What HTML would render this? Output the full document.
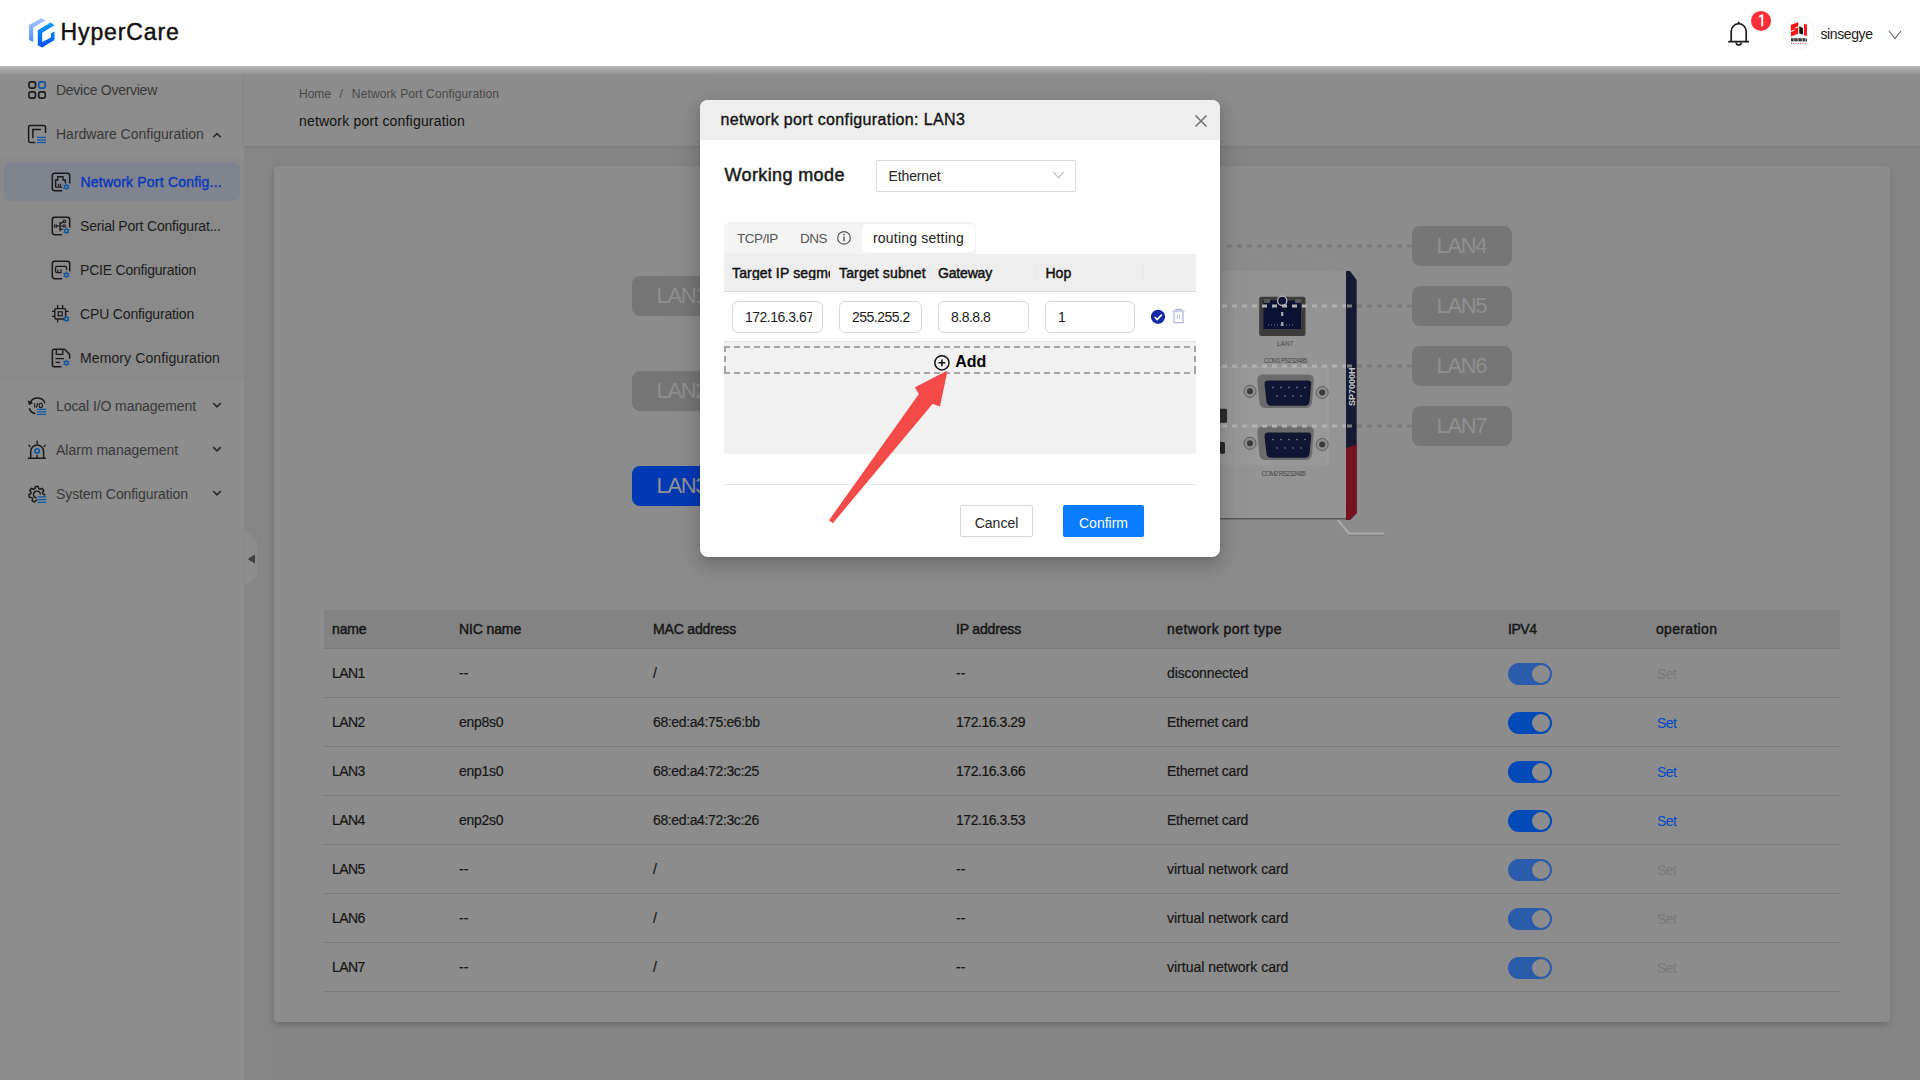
<!DOCTYPE html>
<html><head><meta charset="utf-8"><style>
*{box-sizing:border-box;margin:0;padding:0}
html,body{width:1920px;height:1080px;overflow:hidden}
body{position:relative;background:#858585;font-family:"Liberation Sans",sans-serif;color:#222;}
.a{position:absolute;white-space:nowrap;line-height:1}
#hdr{position:absolute;left:0;top:0;width:1920px;height:66px;background:#fff;z-index:5}
#hshadow{position:absolute;left:0;top:66px;width:1920px;height:9px;background:linear-gradient(#b9b9b9,rgba(140,140,140,0));z-index:4}
#side{position:absolute;left:0;top:66px;width:244px;height:1014px;background:#8d8d8d}
#sub{position:absolute;left:0;top:158px;width:244px;height:222px;background:#8a8a8a}
#act{position:absolute;left:4px;top:162px;width:236px;height:39px;background:#80848e;border-radius:7px}
.mt{font-size:14px;color:#383838}
.mt.sm{color:#1c1c1c}
.mt.act{color:#0838bc;-webkit-text-stroke:0.4px #0838bc}
#ph{position:absolute;left:244px;top:66px;width:1676px;height:80px;background:#8c8c8c;box-shadow:0 1px 3px rgba(0,0,0,0.1)}
#card{position:absolute;left:274px;top:166px;width:1616px;height:856px;background:#8c8c8c;border-radius:4px;box-shadow:-1px 3px 6px -1px rgba(40,50,60,0.35)}
.lanb{position:absolute;width:100px;height:40px;border-radius:8px;background:#767676;color:#8f8f8f;font-size:22px;line-height:39px;text-align:center;letter-spacing:-1.4px;text-indent:-1.4px}
.th{font-size:14px;color:#161616;-webkit-text-stroke:0.45px #161616}
.td{font-size:14px;color:#161616;-webkit-text-stroke:0.2px #161616}
.num{letter-spacing:-0.4px}
.tog{position:absolute;width:44px;height:22px;border-radius:11px;background:#004ab8}
.tog::after{content:"";position:absolute;right:2.2px;top:2px;width:18px;height:18px;border-radius:50%;background:#8c8c8c}
.set{font-size:14px;color:#0048c8}
.setd{font-size:14px;color:#7a7a7a}
.rowb{position:absolute;left:324px;width:1516px;height:1px;background:#7b7b7b}
#modal{position:absolute;left:700px;top:100px;width:520px;height:457px;background:#fff;border-radius:8px;overflow:hidden;z-index:10;box-shadow:0 3px 6px -4px rgba(0,0,0,0.2),0 6px 16px rgba(0,0,0,0.14),0 9px 28px 8px rgba(0,0,0,0.08)}
.togd{background:#2b5cac}
.inp{height:32px;border:1px solid #d9d9d9;border-radius:6px;padding-left:12px;padding-right:12px;overflow:hidden;font-size:14px;line-height:30px;color:#1a1a1a;letter-spacing:-0.5px;background:#fff}
.btn{border-radius:2px;font-size:14px;line-height:30px;padding-top:1.5px;text-align:center;box-shadow:0 2px 0 rgba(0,0,0,0.02)}

.sb{-webkit-text-stroke:0.45px currentColor}

</style></head><body>

<div id="hdr">
  <svg class="a" style="left:0;top:0" width="60" height="60" viewBox="0 0 60 60">
    <defs>
      <linearGradient id="lg1" x1="0" y1="0" x2="0" y2="1"><stop offset="0" stop-color="#a9c9ff"/><stop offset="1" stop-color="#4d8dff"/></linearGradient>
      <linearGradient id="lg2" x1="0" y1="0" x2="0" y2="1"><stop offset="0" stop-color="#0a9dff"/><stop offset="1" stop-color="#0050ff"/></linearGradient>
    </defs>
    <path d="M29.1 25 L41.6 18.1 L45.5 20.4 L33.3 27.4 L33.3 42 L29.1 39.9Z" fill="url(#lg1)"/>
    <path d="M37.8 30.2 L50.6 22.6 L54.5 25.2 L42.2 32.7 L42.2 41.9 L51 37.4 L51 33.2 L54.5 31.4 L54.5 40 L42.1 47.6 L37.8 45.3Z" fill="url(#lg2)"/>
  </svg>
  <div class="a sb" style="left:60.5px;top:20.9px;font-size:23px;letter-spacing:0.9px;color:#111">HyperCare</div>
<svg class="a" style="left:1720px;top:8px" width="60" height="44" viewBox="1720 8 60 44">
  <path d="M1731.2 41.6 V31.5 A7.5 7.8 0 0 1 1746.2 31.5 V41.6" fill="none" stroke="#1a1a1a" stroke-width="1.7"/>
  <path d="M1729 41.7 H1748.2" stroke="#1a1a1a" stroke-width="1.8" stroke-linecap="round"/>
  <path d="M1736.2 42.6 A2.5 2.5 0 0 0 1741.2 42.6" fill="none" stroke="#1a1a1a" stroke-width="1.6"/>
  <path d="M1737.2 23.8 L1738.7 21 L1740.2 23.8Z" fill="#1a1a1a"/>
  <circle cx="1761" cy="20.9" r="10" fill="#fe2f38"/>
</svg>
<svg class="a" style="left:1751px;top:11px" width="20" height="20" viewBox="1751 11 20 20"><path d="M1759.2 16.8 L1762.2 15.2 V26.2" fill="none" stroke="#fff" stroke-width="1.9" stroke-linejoin="round"/></svg>
<svg class="a" style="left:1780px;top:14px" width="40" height="40" viewBox="1780 14 40 40">
  <circle cx="1798.8" cy="33" r="15.8" fill="#fff" stroke="#f0f0f0" stroke-width="0.8"/>
  <path d="M1790.76 24.91 L1798.21 21.92 V33.64 L1790.97 36.41Z" fill="#ff1414"/><path d="M1794.6 28.3 L1798.6 26.6 M1790.6 31.8 L1794.6 30.1" stroke="#fff" stroke-width="1"/><path d="M1794.6 27.9 V30.5" stroke="#ff1414" stroke-width="0.5"/>
  <path d="M1799.28 26.18 L1802.9 27.89 V34.7 L1799.28 33.42Z" fill="#111"/>
  <path d="M1803.96 23.63 L1806.94 24.69 V35.98 L1803.96 35.13Z" fill="#ff1414"/>
  <g fill="#3a3a3a"><rect x="1791" y="38.2" width="2.6" height="3.2"/><rect x="1794.2" y="38.2" width="3.4" height="3.2"/><rect x="1798.2" y="38.2" width="3.6" height="3.2"/><rect x="1802.4" y="38.2" width="2.8" height="3.2"/><rect x="1805.6" y="38.6" width="1.4" height="3"/></g>
  <path d="M1791 43.5 H1807" stroke="#f33" stroke-width="1" stroke-dasharray="1 1.3"/>
</svg>
<div class="a" style="left:1820.5px;top:27.1px;font-size:14px;color:#1a1a1a;letter-spacing:-0.4px">sinsegye</div>
<svg class="a" style="left:1884px;top:26px" width="20" height="16" viewBox="1884 26 20 16">
  <path d="M1889 31 L1895 38.6 L1901 31" fill="none" stroke="#666" stroke-width="1.1"/>
</svg>

</div>
<div id="hshadow"></div>

<div id="side"></div><div id="sub"></div><div id="act"></div>
<div class="a mt" style="left:56px;top:83px;letter-spacing:-0.27px">Device Overview</div>
<div class="a mt" style="left:56px;top:126.9px;letter-spacing:0px">Hardware Configuration</div>
<div class="a mt sm act" style="left:80.5px;top:174.9px;letter-spacing:0.2px">Network Port Config...</div>
<div class="a mt sm" style="left:80px;top:219px;letter-spacing:-0.19px">Serial Port Configurat...</div>
<div class="a mt sm" style="left:80px;top:263px;letter-spacing:-0.21px">PCIE Configuration</div>
<div class="a mt sm" style="left:80px;top:307px;letter-spacing:-0.16px">CPU Configuration</div>
<div class="a mt sm" style="left:80px;top:351px;letter-spacing:0.11px">Memory Configuration</div>
<div class="a mt" style="left:56px;top:399px;letter-spacing:-0.08px">Local I/O management</div>
<div class="a mt" style="left:56px;top:443px;letter-spacing:0px">Alarm management</div>
<div class="a mt" style="left:56px;top:487px;letter-spacing:-0.1px">System Configuration</div>
<svg class="a" style="left:0;top:0;z-index:2" width="250" height="520"><rect x="28.9" y="81.9" width="6.6" height="6.2" rx="2" fill="none" stroke="#1a1a1a" stroke-width="1.6"/>
<rect x="38.7" y="81.9" width="6.6" height="6.2" rx="2" fill="none" stroke="#0b56a6" stroke-width="1.6"/>
<rect x="28.9" y="91.9" width="6.6" height="6.2" rx="2" fill="none" stroke="#1a1a1a" stroke-width="1.6"/>
<rect x="38.7" y="91.9" width="6.6" height="6.2" rx="2" fill="none" stroke="#1a1a1a" stroke-width="1.6"/>
<path d="M45.5 133 V127.5 Q45.5 125.5 43.5 125.5 H30.5 Q28.6 125.5 28.6 127.5 V140.6 Q28.6 142.6 30.5 142.6 H35.3" fill="none" stroke="#1a1a1a" stroke-width="1.5"/>
<path d="M32.9 138.2 V129.6 H41" fill="none" stroke="#1a1a1a" stroke-width="1.5"/>
<line x1="37" y1="137.4" x2="46" y2="137.4" stroke="#0b56a6" stroke-width="1.3"/>
<line x1="37" y1="140" x2="46" y2="140" stroke="#0b56a6" stroke-width="1.3"/>
<line x1="37" y1="142.5" x2="46" y2="142.5" stroke="#0b56a6" stroke-width="1.3"/>
<path d="M69.7 183.6 V175.8 Q69.7 173.3 67.3 173.3 H54.8 Q52.3 173.3 52.3 175.8 V188.3 Q52.3 190.7 54.8 190.7 H62.1" fill="none" stroke="#1a1a1a" stroke-width="1.5"/>
<path d="M55.6 187.2 V180 H57.8 V176.8 H63 V180 H65.3 V183.2" fill="none" stroke="#1a1a1a" stroke-width="1.4"/><path d="M55.6 187.2 H62.6 M58.4 183.8 V187 M60.4 183.8 V187" stroke="#1a1a1a" stroke-width="1.1"/>
<polygon points="66.40,183.10 69.60,188.65 63.20,188.65" fill="#0b56a6"/><polygon points="66.40,190.50 63.20,184.95 69.60,184.95" fill="#0b56a6"/><circle cx="66.4" cy="186.8" r="1.15" fill="#80848e"/>
<path d="M69.7 227.6 V219.8 Q69.7 217.3 67.3 217.3 H54.8 Q52.3 217.3 52.3 219.8 V232.3 Q52.3 234.7 54.8 234.7 H62.1" fill="none" stroke="#1a1a1a" stroke-width="1.5"/>
<path d="M56.5 226 H63 M60 222 V231.5 M60 224.2 L63.3 221.8 M60 228.6 L62.6 229.6" fill="none" stroke="#1a1a1a" stroke-width="1.2"/><circle cx="55.6" cy="226" r="1.3" fill="none" stroke="#1a1a1a" stroke-width="1.1"/><circle cx="64.4" cy="221.3" r="1.3" fill="none" stroke="#1a1a1a" stroke-width="1.1"/><circle cx="64.2" cy="226" r="1.2" fill="none" stroke="#1a1a1a" stroke-width="1.1"/>
<polygon points="66.40,227.10 69.60,232.65 63.20,232.65" fill="#0b56a6"/><polygon points="66.40,234.50 63.20,228.95 69.60,228.95" fill="#0b56a6"/><circle cx="66.4" cy="230.8" r="1.15" fill="#8a8a8a"/>
<path d="M69.7 271.6 V263.8 Q69.7 261.3 67.3 261.3 H54.8 Q52.3 261.3 52.3 263.8 V276.3 Q52.3 278.7 54.8 278.7 H62.1" fill="none" stroke="#1a1a1a" stroke-width="1.5"/>
<path d="M66.6 269.8 V268 Q66.6 266.4 65 266.4 H57.1 Q55.5 266.4 55.5 268 V271 Q55.5 272.6 57.1 272.6 H61.5" fill="none" stroke="#1a1a1a" stroke-width="1.3"/><path d="M57.8 269.4 V272.4 M61 269.4 V272.4" stroke="#1a1a1a" stroke-width="1.2"/><polygon points="66.40,271.10 69.60,276.65 63.20,276.65" fill="#0b56a6"/><polygon points="66.40,278.50 63.20,272.95 69.60,272.95" fill="#0b56a6"/><circle cx="66.4" cy="274.8" r="1.15" fill="#8a8a8a"/>
<rect x="54.8" y="308.6" width="10.8" height="10.4" rx="1.2" fill="none" stroke="#1a1a1a" stroke-width="1.4"/><rect x="58.2" y="311.8" width="4" height="4" fill="none" stroke="#1a1a1a" stroke-width="1.2"/>
<path d="M57.6 305 V308.6 M62.6 305 V308.6 M57.6 319 V322.6 M52 311.4 H54.8 M52 316.4 H54.8 M65.6 311.4 H68.6" stroke="#1a1a1a" stroke-width="1.3"/>
<polygon points="66.40,315.10 69.60,320.65 63.20,320.65" fill="#0b56a6"/><polygon points="66.40,322.50 63.20,316.95 69.60,316.95" fill="#0b56a6"/><circle cx="66.4" cy="318.8" r="1.15" fill="#8a8a8a"/>
<path d="M61.4 366.7 H54.3 Q52.4 366.7 52.4 364.7 V351.3 Q52.4 349.3 54.3 349.3 H64.5 L69.6 354.4 V358.8" fill="none" stroke="#1a1a1a" stroke-width="1.5"/><path d="M56.3 349.6 V354.3 H62.8 V349.6" fill="none" stroke="#1a1a1a" stroke-width="1.3"/><path d="M55.5 358.6 H64 M55.5 362.3 H60" stroke="#1a1a1a" stroke-width="1.3"/>
<polygon points="66.40,359.10 69.60,364.65 63.20,364.65" fill="#0b56a6"/><polygon points="66.40,366.50 63.20,360.95 69.60,360.95" fill="#0b56a6"/><circle cx="66.4" cy="362.8" r="1.15" fill="#8a8a8a"/>
<path d="M45.1 403.3 A8 8 0 0 0 30.3 402.6" fill="none" stroke="#1a1a1a" stroke-width="1.5"/>
<path d="M29.3 408.2 A8 8 0 0 0 35.3 413.6" fill="none" stroke="#1a1a1a" stroke-width="1.5"/>
<path d="M28 400.8 L29.2 404.8 L32.6 403Z" fill="#1a1a1a" stroke="#1a1a1a" stroke-width="0.6" stroke-linejoin="round"/>
<path d="M34.6 403.2 V407.6 M37.9 403 L36.1 407.8" stroke="#1a1a1a" stroke-width="1.1"/><ellipse cx="40.8" cy="405.4" rx="1.7" ry="2.2" fill="none" stroke="#1a1a1a" stroke-width="1.1"/>
<line x1="37.4" y1="409.3" x2="45.8" y2="409.3" stroke="#0b56a6" stroke-width="1.25" stroke-linecap="round"/>
<line x1="37.4" y1="411.8" x2="45.8" y2="411.8" stroke="#0b56a6" stroke-width="1.25" stroke-linecap="round"/>
<line x1="37.4" y1="414.3" x2="45.8" y2="414.3" stroke="#0b56a6" stroke-width="1.25" stroke-linecap="round"/>
<path d="M28.4 458.3 H45.4" stroke="#1a1a1a" stroke-width="1.5" stroke-linecap="round"/><path d="M30.7 458.3 V451.5 A6.45 6.45 0 0 1 43.6 451.5 V458.3" fill="none" stroke="#1a1a1a" stroke-width="1.5"/>
<path d="M37.1 441.2 V443.6 M28.8 445.2 L30 446.6 M45.2 445.2 L44 446.6 M37.1 455.3 V458" stroke="#1a1a1a" stroke-width="1.3" stroke-linecap="round"/>
<circle cx="37.1" cy="450.9" r="2.2" fill="none" stroke="#0b56a6" stroke-width="1.5"/>
<path d="M38.71 488.61 L38.16 486.42 L35.44 486.42 L34.89 488.61 L33.54 489.26 L31.48 488.32 L29.79 490.45 L31.16 492.24 L30.83 493.71 L28.81 494.73 L29.42 497.38 L31.68 497.42 L32.61 498.60 L32.16 500.81 L34.60 501.99 L36.05 500.25 L37.55 500.25 L39.00 501.99 L41.44 500.81 L40.99 498.60 L41.92 497.42 L44.18 497.38 L44.79 494.73 L42.77 493.71 L42.44 492.24 L43.81 490.45 L42.12 488.32 L40.06 489.26Z" fill="none" stroke="#1a1a1a" stroke-width="1.45" stroke-linejoin="round"/>
<path d="M40.3 494.6 A3.4 3.4 0 1 0 36.6 497.9" fill="none" stroke="#1a1a1a" stroke-width="1.45"/>
<rect x="37.2" y="495.6" width="10" height="9" fill="#8c8c8c"/>
<line x1="38" y1="496.9" x2="45.8" y2="496.9" stroke="#0b56a6" stroke-width="1.25" stroke-linecap="round"/>
<line x1="38" y1="499.6" x2="45.8" y2="499.6" stroke="#0b56a6" stroke-width="1.25" stroke-linecap="round"/>
<line x1="38" y1="502.3" x2="45.8" y2="502.3" stroke="#0b56a6" stroke-width="1.25" stroke-linecap="round"/>
<path d="M213.2 137.3 L217 133.6 L220.8 137.3" fill="none" stroke="#2a2a2a" stroke-width="1.6"/>
<path d="M213.2 403.1 L217 406.9 L220.8 403.1" fill="none" stroke="#2a2a2a" stroke-width="1.6"/>
<path d="M213.2 447.1 L217 450.9 L220.8 447.1" fill="none" stroke="#2a2a2a" stroke-width="1.6"/>
<path d="M213.2 491.1 L217 494.9 L220.8 491.1" fill="none" stroke="#2a2a2a" stroke-width="1.6"/></svg>
<div class="a" style="left:244px;top:146px;width:30px;height:934px;background:#868686"></div>
<svg class="a" style="left:240px;top:520px" width="30" height="80" viewBox="240 520 30 80">
  <path d="M245 530 L257 541 V575 L245 586Z" fill="#8d8d8d"/>
  <path d="M247.5 559 L255 554.5 V563.5Z" fill="#404040"/>
</svg>

<div id="ph"></div>
<div class="a" style="left:299px;top:87.6px;font-size:12px;color:#484848">Home<span style="margin:0 9px 0 8.5px">/</span><span style="letter-spacing:0.12px">Network Port Configuration</span></div>
<div class="a" style="left:299px;top:114px;font-size:14px;color:#111;letter-spacing:0.19px">network port configuration</div>
<div id="card"></div>
<!-- LAN buttons -->
<div class="lanb" style="left:632px;top:276px">LAN1</div>
<div class="lanb" style="left:632px;top:371px">LAN2</div>
<div class="lanb" style="left:632px;top:466px;background:#0039b4;color:#939393">LAN3</div>
<div class="lanb" style="left:1412px;top:226px">LAN4</div>
<div class="lanb" style="left:1412px;top:286px">LAN5</div>
<div class="lanb" style="left:1412px;top:346px">LAN6</div>
<div class="lanb" style="left:1412px;top:406px">LAN7</div>
<svg class="a" style="left:1200px;top:190px" width="240" height="360" viewBox="1200 190 240 360">
  <defs>
    <linearGradient id="face" x1="0" y1="0" x2="0" y2="1"><stop offset="0" stop-color="#929292"/><stop offset="0.5" stop-color="#959595"/><stop offset="1" stop-color="#939393"/></linearGradient>
    <linearGradient id="stripe" x1="0" y1="0" x2="0" y2="1"><stop offset="0" stop-color="#141a33"/><stop offset="0.7" stop-color="#151a30"/><stop offset="0.71" stop-color="#6a1020"/><stop offset="1" stop-color="#7a1424"/></linearGradient>
  </defs>
  <!-- faint perspective lines -->
  <path d="M1220 238 L1270 258 M1300 252 L1345 268" stroke="#8fa0a8" stroke-width="0.6" opacity="0.6"/>
  <!-- foot -->
  <path d="M1337.5 519.5 L1349 533.5 H1384.5" fill="none" stroke="#a9a9a9" stroke-width="2.2"/>
  <path d="M1349 535.5 H1384.5" stroke="#7a7a7a" stroke-width="0.8"/>
  <!-- face -->
  <rect x="1200" y="271" width="146.5" height="248" fill="url(#face)"/>
  <rect x="1200" y="518" width="146.5" height="1.5" fill="#5a5a5a"/>
  <!-- stripe -->
  <path d="M1346 271 H1350 L1356.7 280 V513 L1350 520 H1346Z" fill="#151a32"/>
  <path d="M1346 448 L1356.7 444.5 V513 L1350 520 H1346Z" fill="#741222"/>
  <text x="0" y="0" transform="translate(1354.5 406) rotate(-90)" font-family="Liberation Sans" font-size="9" font-weight="bold" fill="#c8c8c8">SP7000H</text>
  <!-- panel -->
  <rect x="1200" y="367.5" width="128" height="97.5" fill="#989898"/>
  <path d="M1200 367.5 H1328 V465" fill="none" stroke="#a5a5a5" stroke-width="0.8"/>
  <!-- RJ45 -->
  <rect x="1259.2" y="296.7" width="46.3" height="39.4" rx="2" fill="#3c3c3c"/>
  <rect x="1263.5" y="300.5" width="37.5" height="28.5" fill="#0a1132"/>
  <rect x="1264" y="299" width="6" height="4" fill="#555"/>
  <rect x="1295" y="299" width="6" height="4" fill="#555"/>
  <circle cx="1282.2" cy="300.8" r="4.6" fill="#0a1132" stroke="#b9b9b9" stroke-width="1.3"/><rect x="1281" y="312" width="2.4" height="4" fill="#9a9aa8"/><rect x="1281" y="322" width="2.4" height="4" fill="#9a9aa8"/><path d="M1268 325 H1294" stroke="#9a9aa8" stroke-width="0.8" stroke-dasharray="1 2"/>
  <text x="1277" y="346" font-family="Liberation Sans" font-size="6.5" fill="#4a4a4a">LAN7</text>
  <text x="1264" y="362.5" font-family="Liberation Sans" font-size="6.6" fill="#4a4a4a" textLength="43.5">COM1 PS232/485</text>
  <!-- DB9 COM1 -->
  <g id="db9">
    <circle cx="1250" cy="391.3" r="6" fill="#8e8e8e" stroke="#5e5e5e" stroke-width="1"/>
    <circle cx="1250" cy="391.3" r="3" fill="#3a3a3a"/>
    <circle cx="1322.2" cy="392.5" r="6" fill="#8e8e8e" stroke="#5e5e5e" stroke-width="1"/>
    <circle cx="1322.2" cy="392.5" r="3" fill="#3a3a3a"/>
    <path d="M1257.3 380 Q1257.3 374.5 1263 374.5 H1308 Q1314 374.5 1313.8 380 L1312 403 Q1311 408 1305 408 H1266 Q1260 408 1259.5 403Z" fill="#6c6c6c"/>
    <path d="M1264.5 384 Q1264.5 380.5 1268 380.5 H1308 Q1311.6 380.5 1311.2 384 L1309.5 402 Q1309 405.7 1305 405.7 H1271 Q1267 405.7 1266.5 402Z" fill="#0f1533"/>
    <g fill="#8a8a9a"><circle cx="1273" cy="387.5" r="0.8"/><circle cx="1281" cy="387.5" r="0.8"/><circle cx="1289" cy="387.5" r="0.8"/><circle cx="1297" cy="387.5" r="0.8"/><circle cx="1305" cy="387.5" r="0.8"/><circle cx="1277" cy="396" r="0.8"/><circle cx="1285" cy="396" r="0.8"/><circle cx="1293" cy="396" r="0.8"/><circle cx="1301" cy="396" r="0.8"/></g>
  </g>
  <use href="#db9" transform="translate(0 52)"/>
  <text x="1261.5" y="476" font-family="Liberation Sans" font-size="6.6" fill="#4a4a4a" textLength="44.5">COM2 RS232/485</text>
  <!-- small left ports -->
  <rect x="1215" y="408.7" width="12" height="14" rx="1.5" fill="#2a2a2a"/>
  <rect x="1215" y="442" width="10" height="11.7" rx="1.5" fill="#2a2a2a"/>
  <!-- dashed connectors -->
  <g stroke-width="3" stroke-dasharray="5 5">
    <path d="M1222 246 H1412" stroke="#7b7b7b" stroke-dashoffset="5"/>
    <path d="M1222 306 H1346" stroke="#b1b1b1"/><path d="M1346 306 H1412" stroke="#7b7b7b" stroke-dashoffset="9"/>
    <path d="M1222 366 H1346" stroke="#b1b1b1"/><path d="M1346 366 H1412" stroke="#7b7b7b" stroke-dashoffset="9"/>
    <path d="M1222 426 H1346" stroke="#b1b1b1"/><path d="M1346 426 H1412" stroke="#7b7b7b" stroke-dashoffset="9"/>
  </g>
</svg>

<div class="a" style="left:324px;top:610px;width:1516px;height:38px;background:#838383"></div>
<div class="rowb" style="top:648px"></div>
<div class="a" style="left:450px;top:620px;width:1px;height:18px;background:#818181"></div>
<div class="a" style="left:644px;top:620px;width:1px;height:18px;background:#818181"></div>
<div class="a" style="left:947px;top:620px;width:1px;height:18px;background:#818181"></div>
<div class="a" style="left:1158px;top:620px;width:1px;height:18px;background:#818181"></div>
<div class="a" style="left:1499px;top:620px;width:1px;height:18px;background:#818181"></div>
<div class="a" style="left:1647px;top:620px;width:1px;height:18px;background:#818181"></div>
<div class="a th" style="left:332px;top:622.2px;letter-spacing:-0.12px">name</div>
<div class="a th" style="left:459px;top:622.2px;letter-spacing:-0.12px">NIC name</div>
<div class="a th" style="left:653px;top:622.2px;letter-spacing:-0.16px">MAC address</div>
<div class="a th" style="left:956px;top:622.2px;letter-spacing:-0.17px">IP address</div>
<div class="a th" style="left:1167px;top:622.2px;letter-spacing:0.45px">network port type</div>
<div class="a th" style="left:1508px;top:622.2px;letter-spacing:-0.47px">IPV4</div>
<div class="a th" style="left:1656px;top:622.2px;letter-spacing:0.32px">operation</div>
<div class="a td" style="left:332px;top:666px;letter-spacing:-0.6px">LAN1</div>
<div class="a td" style="left:459px;top:666px;letter-spacing:0px">--</div>
<div class="a td" style="left:653px;top:666px;letter-spacing:0px">/</div>
<div class="a td" style="left:956px;top:666px;letter-spacing:0px">--</div>
<div class="a td" style="left:1167px;top:666px;letter-spacing:-0.12px">disconnected</div>
<div class="tog togd" style="left:1508px;top:663px"></div>
<div class="a setd" style="left:1657px;top:667px;letter-spacing:-0.6px">Set</div>
<div class="rowb" style="top:697px"></div>
<div class="a td" style="left:332px;top:715px;letter-spacing:-0.6px">LAN2</div>
<div class="a td" style="left:459px;top:715px;letter-spacing:-0.3px">enp8s0</div>
<div class="a td" style="left:653px;top:715px;letter-spacing:-0.37px">68:ed:a4:75:e6:bb</div>
<div class="a td" style="left:956px;top:715px;letter-spacing:-0.45px">172.16.3.29</div>
<div class="a td" style="left:1167px;top:715px;letter-spacing:-0.22px">Ethernet card</div>
<div class="tog" style="left:1508px;top:712px"></div>
<div class="a set" style="left:1657px;top:716px;letter-spacing:-0.6px">Set</div>
<div class="rowb" style="top:746px"></div>
<div class="a td" style="left:332px;top:764px;letter-spacing:-0.6px">LAN3</div>
<div class="a td" style="left:459px;top:764px;letter-spacing:-0.3px">enp1s0</div>
<div class="a td" style="left:653px;top:764px;letter-spacing:-0.37px">68:ed:a4:72:3c:25</div>
<div class="a td" style="left:956px;top:764px;letter-spacing:-0.45px">172.16.3.66</div>
<div class="a td" style="left:1167px;top:764px;letter-spacing:-0.22px">Ethernet card</div>
<div class="tog" style="left:1508px;top:761px"></div>
<div class="a set" style="left:1657px;top:765px;letter-spacing:-0.6px">Set</div>
<div class="rowb" style="top:795px"></div>
<div class="a td" style="left:332px;top:813px;letter-spacing:-0.6px">LAN4</div>
<div class="a td" style="left:459px;top:813px;letter-spacing:-0.3px">enp2s0</div>
<div class="a td" style="left:653px;top:813px;letter-spacing:-0.37px">68:ed:a4:72:3c:26</div>
<div class="a td" style="left:956px;top:813px;letter-spacing:-0.45px">172.16.3.53</div>
<div class="a td" style="left:1167px;top:813px;letter-spacing:-0.22px">Ethernet card</div>
<div class="tog" style="left:1508px;top:810px"></div>
<div class="a set" style="left:1657px;top:814px;letter-spacing:-0.6px">Set</div>
<div class="rowb" style="top:844px"></div>
<div class="a td" style="left:332px;top:862px;letter-spacing:-0.6px">LAN5</div>
<div class="a td" style="left:459px;top:862px;letter-spacing:0px">--</div>
<div class="a td" style="left:653px;top:862px;letter-spacing:0px">/</div>
<div class="a td" style="left:956px;top:862px;letter-spacing:0px">--</div>
<div class="a td" style="left:1167px;top:862px;letter-spacing:0px">virtual network card</div>
<div class="tog togd" style="left:1508px;top:859px"></div>
<div class="a setd" style="left:1657px;top:863px;letter-spacing:-0.6px">Set</div>
<div class="rowb" style="top:893px"></div>
<div class="a td" style="left:332px;top:911px;letter-spacing:-0.6px">LAN6</div>
<div class="a td" style="left:459px;top:911px;letter-spacing:0px">--</div>
<div class="a td" style="left:653px;top:911px;letter-spacing:0px">/</div>
<div class="a td" style="left:956px;top:911px;letter-spacing:0px">--</div>
<div class="a td" style="left:1167px;top:911px;letter-spacing:0px">virtual network card</div>
<div class="tog togd" style="left:1508px;top:908px"></div>
<div class="a setd" style="left:1657px;top:912px;letter-spacing:-0.6px">Set</div>
<div class="rowb" style="top:942px"></div>
<div class="a td" style="left:332px;top:960px;letter-spacing:-0.6px">LAN7</div>
<div class="a td" style="left:459px;top:960px;letter-spacing:0px">--</div>
<div class="a td" style="left:653px;top:960px;letter-spacing:0px">/</div>
<div class="a td" style="left:956px;top:960px;letter-spacing:0px">--</div>
<div class="a td" style="left:1167px;top:960px;letter-spacing:0px">virtual network card</div>
<div class="tog togd" style="left:1508px;top:957px"></div>
<div class="a setd" style="left:1657px;top:961px;letter-spacing:-0.6px">Set</div>
<div class="rowb" style="top:991px"></div>
<div id="modal">
  <div class="a" style="left:0;top:0;width:520px;height:40px;background:#eeeeee"></div>
  <div class="a" style="left:20.4px;top:12px;font-size:16px;color:#111;letter-spacing:0.37px;-webkit-text-stroke:0.35px #111">network port configuration: LAN3</div>
  <svg class="a" style="left:490px;top:10px" width="22" height="22" viewBox="0 0 22 22"><path d="M5.5 5.5 L16.5 16.5 M16.5 5.5 L5.5 16.5" stroke="#707070" stroke-width="1.5"/></svg>
  <div class="a" style="left:24.5px;top:65.6px;font-size:18px;color:#1a1a1a;letter-spacing:0.38px;-webkit-text-stroke:0.5px #1a1a1a">Working mode</div>
  <div class="a" style="left:176px;top:60px;width:200px;height:32px;border:1px solid #d9d9d9;border-radius:2px"></div>
  <div class="a" style="left:188.5px;top:69px;font-size:14px;color:#262626;letter-spacing:-0.12px">Ethernet</div>
  <svg class="a" style="left:350px;top:70px" width="16" height="12" viewBox="0 0 16 12"><path d="M3.5 2 L8.5 8 L13.5 2" fill="none" stroke="#b0b0b0" stroke-width="1.1"/></svg>
  <!-- tabs -->
  <div class="a" style="left:24px;top:122px;width:252px;height:32px;background:#f4f4f4;border-radius:6px 6px 0 0"></div>
  <div class="a" style="left:162px;top:124px;width:113px;height:28px;background:#fff;border-radius:5px"></div>
  <div class="a" style="left:37px;top:132px;font-size:13.5px;color:#555;letter-spacing:-0.45px">TCP/IP</div>
  <div class="a" style="left:100px;top:132px;font-size:13.5px;color:#555;letter-spacing:-0.55px">DNS</div>
  <svg class="a" style="left:136px;top:130px" width="16" height="16" viewBox="0 0 16 16"><circle cx="8" cy="7.9" r="6.3" fill="none" stroke="#555" stroke-width="1.2"/><path d="M8 6.5 V11.3" stroke="#555" stroke-width="1.4"/><circle cx="8" cy="4.6" r="0.85" fill="#555"/></svg>
  <div class="a" style="left:173px;top:131px;font-size:14px;color:#222;letter-spacing:0.2px">routing setting</div>
  <!-- route table -->
  <div class="a" style="left:24px;top:154px;width:472px;height:38px;background:#eeeeee;border-bottom:1px solid #dcdcdc"></div>
  <div class="a" style="left:130.5px;top:162px;width:1px;height:21px;background:#e9e9e9"></div>
  <div class="a" style="left:229.2px;top:162px;width:1px;height:21px;background:#e9e9e9"></div>
  <div class="a" style="left:336.3px;top:162px;width:1px;height:21px;background:#e9e9e9"></div>
  <div class="a" style="left:442.8px;top:162px;width:1px;height:21px;background:#e9e9e9"></div>
  <div class="a" style="left:32px;top:166.2px;width:98px;overflow:hidden;font-size:14px;color:#111;letter-spacing:0.15px;-webkit-text-stroke:0.45px #111">Target IP segment</div>
  <div class="a" style="left:139px;top:166.2px;font-size:14px;color:#111;letter-spacing:0.15px;-webkit-text-stroke:0.45px #111">Target subnet</div>
  <div class="a" style="left:238px;top:166.2px;font-size:14px;color:#111;letter-spacing:-0.17px;-webkit-text-stroke:0.45px #111">Gateway</div>
  <div class="a" style="left:345.5px;top:166.2px;font-size:14px;color:#111;letter-spacing:0px;-webkit-text-stroke:0.45px #111">Hop</div>
  <!-- inputs -->
  <div class="a inp" style="left:32px;top:201px;width:91px"><div style="width:67px;overflow:hidden">172.16.3.67</div></div>
  <div class="a inp" style="left:139px;top:201px;width:83px"><div style="width:59px;overflow:hidden">255.255.2</div></div>
  <div class="a inp" style="left:238px;top:201px;width:90.5px"><div style="width:66.5px;overflow:hidden">8.8.8.8</div></div>
  <div class="a inp" style="left:345px;top:201px;width:90px"><div style="width:66px;overflow:hidden">1</div></div>
  <svg class="a" style="left:448px;top:208px" width="40" height="18" viewBox="1148 308 40 18">
    <circle cx="1158" cy="316.8" r="7.1" fill="#1428a8"/>
    <path d="M1154.6 317 L1157.2 319.6 L1161.8 314.6" fill="none" stroke="#fff" stroke-width="1.6"/>
    <path d="M1172.5 311 H1184.5" stroke="#aeb2dc" stroke-width="1.2"/>
    <path d="M1175.8 310.6 V309.4 H1181.4 V310.6" fill="none" stroke="#aeb2dc" stroke-width="1.1"/>
    <path d="M1174 311.5 V322.6 H1183 V311.5" fill="none" stroke="#aeb2dc" stroke-width="1.2"/>
    <path d="M1177.3 315 V319 M1179.7 315 V319" stroke="#aeb2dc" stroke-width="0.9"/>
  </svg>
  <div class="a" style="left:24px;top:241px;width:472px;height:1px;background:#e6e6e6"></div>
  <!-- add area -->
  <div class="a" style="left:24px;top:242px;width:472px;height:112px;background:#f1f1f1"></div>
  <svg class="a" style="left:24px;top:246px" width="472" height="29" viewBox="0 0 472 29">
    <g stroke="#a6a6a6" stroke-width="2" stroke-dasharray="6 4" fill="none">
      <path d="M0 1 H472"/><path d="M0 27 H472"/><path d="M1 0 V28"/><path d="M471 0 V28"/>
    </g>
  </svg>
  <svg class="a" style="left:232px;top:254px" width="20" height="20" viewBox="932 354 20 20">
    <circle cx="941.9" cy="362.8" r="7.1" fill="none" stroke="#111" stroke-width="1.5"/>
    <path d="M938.5 362.8 H945.3 M941.9 359.4 V366.2" stroke="#111" stroke-width="1.5"/>
  </svg>
  <div class="a" style="left:255.2px;top:254.3px;font-size:16px;font-weight:bold;color:#000">Add</div>
  <!-- footer -->
  <div class="a" style="left:24px;top:384px;width:472px;height:1px;background:#e8e8e8"></div>
  <div class="a btn" style="left:260px;top:405px;width:73px;height:32px;border:1px solid #d9d9d9;color:#262626">Cancel</div>
  <div class="a btn" style="left:363px;top:405px;width:81px;height:32px;line-height:32px;background:#0a7cff;color:#fff">Confirm</div>
</div>

<svg class="a" style="left:0;top:0;z-index:20" width="1920" height="1080" viewBox="0 0 1920 1080">
  <path d="M830 520.2 L919.9 394 L915.9 387.6 L946.4 372 L939.4 405.4 L932.3 403.1 L832.6 522.2Z" fill="#f44a4a" stroke="#f44a4a" stroke-width="1.6" stroke-linejoin="round"/>
</svg>


</body></html>
